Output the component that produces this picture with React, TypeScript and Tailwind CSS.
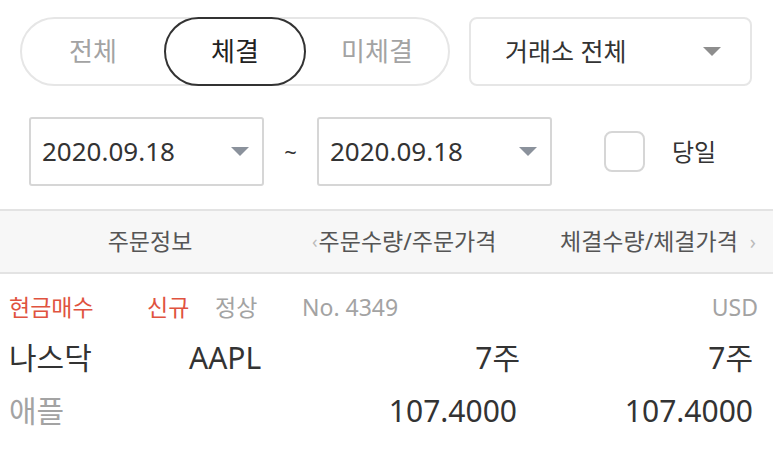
const font = { fontFamily: '"Noto Sans", "Noto Sans CJK KR", sans-serif' };

function Caret({ className }: { className: string }) {
  return (
    <svg width="18" height="9" viewBox="0 0 18 9" className={className}>
      <path d="M0 0 H18 L9 9 Z" fill="currentColor" />
    </svg>
  );
}

function DateBox({ value }: { value: string }) {
  return (
    <div className="flex h-[69px] w-[235px] items-center justify-between rounded-[3px] border-2 border-[#d6d6d6] bg-white pl-[11px] pr-[13px]">
      <span className="text-[26px] text-[#333]">{value}</span>
      <Caret className="text-[#8b929c]" />
    </div>
  );
}

export default function App() {
  const tabs = ["전체", "체결", "미체결"];
  const active = 1;

  return (
    <div className="min-h-screen w-[773px] bg-white" style={font}>
      <div className="flex items-center gap-[19px] pl-[20px] pr-[21px] pt-[17px]">
        <div className="flex h-[69px] w-[430px] items-center rounded-full border-2 border-[#e6e6e6]">
          {tabs.map((t, i) => (
            <div
              key={t}
              className={
                i === active
                  ? "flex h-[69px] w-[143px] items-center justify-center rounded-full border-2 border-[#333] text-[26px] text-[#222]"
                  : "flex h-full w-[143px] items-center justify-center text-[26px] text-[#a3a3a3]"
              }
            >
              {t}
            </div>
          ))}
        </div>
        <div className="flex h-[69px] flex-1 items-center justify-between rounded-[8px] border-2 border-[#e6e6e6] pl-[34px] pr-[29px]">
          <span className="text-[25px] text-[#333]">거래소 전체</span>
          <Caret className="text-[#8e8e8e]" />
        </div>
      </div>

      <div className="flex items-center pl-[29px] pt-[31px]">
        <DateBox value="2020.09.18" />
        <span className="w-[53px] text-center text-[22px] text-[#333]">~</span>
        <DateBox value="2020.09.18" />
        <div className="ml-[52px] h-[41px] w-[41px] rounded-[8px] border-2 border-[#d6d6d6]" />
        <span className="ml-[27px] text-[24px] text-[#333]">당일</span>
      </div>

      <div className="mt-[23px] flex h-[65px] items-center border-y-2 border-[#e3e3e3] bg-[#f7f7f7] text-[23px] text-[#555]">
        <div className="w-[300px] text-center">주문정보</div>
        <div className="flex w-[260px] items-center pl-[12px]">
          <span className="mr-[1px] text-[18px] text-[#bbb]">‹</span>
          <span>주문수량/주문가격</span>
        </div>
        <div className="flex items-center">
          <span>체결수량/체결가격</span>
          <span className="ml-[12px] text-[20px] text-[#bbb]">›</span>
        </div>
      </div>

      <div className="px-[9px] pt-[16px]">
        <div className="flex h-[34px] items-center justify-between text-[23px]">
          <div className="flex items-center">
            <span className="w-[138px] text-[#e0533f]">현금매수</span>
            <span className="w-[68px] text-[#e0533f]">신규</span>
            <span className="w-[87px] text-[#a3a3a3]">정상</span>
            <span className="text-[#a3a3a3]">No. 4349</span>
          </div>
          <span className="pr-[6px] text-[#a3a3a3]">USD</span>
        </div>
        <div className="mt-[13px] flex h-[40px] items-center text-[30px] text-[#333]">
          <span className="w-[180px]">나스닥</span>
          <span className="w-[160px]">AAPL</span>
          <span className="w-[171px] text-right">7주</span>
          <span className="w-[233px] text-right">7주</span>
        </div>
        <div className="mt-[13px] flex h-[40px] items-center text-[30px]">
          <span className="w-[340px] text-[#a3a3a3]">애플</span>
          <span className="w-[168px] text-right text-[#333]">107.4000</span>
          <span className="w-[236px] text-right text-[#333]">107.4000</span>
        </div>
      </div>
    </div>
  );
}
